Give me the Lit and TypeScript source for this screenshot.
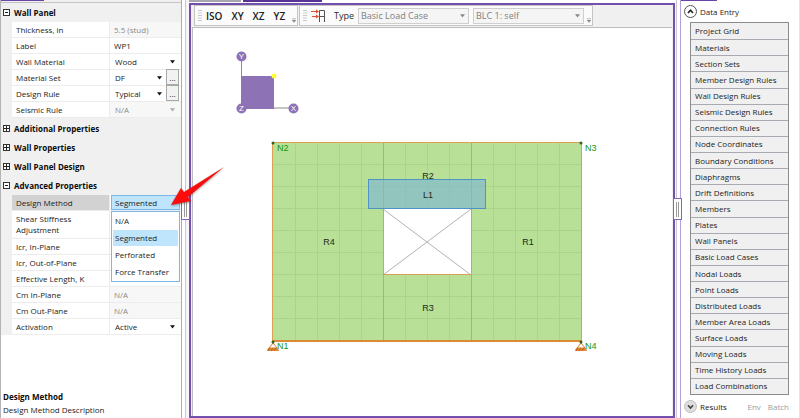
import { LitElement, html, svg, css, nothing } from "lit";
import { customElement, state } from "lit/decorators.js";
import { classMap } from "lit/directives/class-map.js";

type Kind = "text" | "readonly" | "select" | "disabled" | "lookup" | "open";
interface Prop {
  id: string;
  label: string;
  value: string;
  kind: Kind;
  tall?: boolean;
}
interface Group {
  title: string;
  open: boolean;
  props: Prop[];
}

const GROUPS: Group[] = [
  {
    title: "Wall Panel",
    open: true,
    props: [
      { id: "thickness", label: "Thickness, in", value: "5.5 (stud)", kind: "readonly" },
      { id: "label", label: "Label", value: "WP1", kind: "text" },
      { id: "material", label: "Wall Material", value: "Wood", kind: "select" },
      { id: "set", label: "Material Set", value: "DF", kind: "lookup" },
      { id: "rule", label: "Design Rule", value: "Typical", kind: "lookup" },
      { id: "seismic", label: "Seismic Rule", value: "N/A", kind: "disabled" },
    ],
  },
  { title: "Additional Properties", open: false, props: [] },
  { title: "Wall Properties", open: false, props: [] },
  { title: "Wall Panel Design", open: false, props: [] },
  {
    title: "Advanced Properties",
    open: true,
    props: [
      { id: "method", label: "Design Method", value: "Segmented", kind: "open" },
      { id: "shear", label: "Shear Stiffness Adjustment", value: "", kind: "text", tall: true },
      { id: "icr-in", label: "Icr, In-Plane", value: "", kind: "text" },
      { id: "icr-out", label: "Icr, Out-of-Plane", value: "", kind: "text" },
      { id: "length", label: "Effective Length, K", value: "", kind: "text" },
      { id: "cm-in", label: "Cm In-Plane", value: "N/A", kind: "readonly" },
      { id: "cm-out", label: "Cm Out-Plane", value: "N/A", kind: "readonly" },
      { id: "activation", label: "Activation", value: "Active", kind: "select" },
    ],
  },
];

const METHODS = ["N/A", "Segmented", "Perforated", "Force Transfer"];

const ENTRIES = [
  "Project Grid", "Materials", "Section Sets", "Member Design Rules", "Wall Design Rules",
  "Seismic Design Rules", "Connection Rules", "Node Coordinates", "Boundary Conditions",
  "Diaphragms", "Drift Definitions", "Members", "Plates", "Wall Panels", "Basic Load Cases",
  "Nodal Loads", "Point Loads", "Distributed Loads", "Member Area Loads", "Surface Loads",
  "Moving Loads", "Time History Loads", "Load Combinations",
];

const shared = css`
  * { box-sizing: border-box; }
  button, input, select {
    font: inherit;
    color: inherit;
    margin: 0;
    padding: 0;
    border: 0;
    border-radius: 0;
    background: none;
    appearance: none;
    min-width: 0;
  }
  select:disabled, input:disabled { opacity: 1; }
`;

@customElement("property-panel")
class PropertyPanel extends LitElement {
  static styles = [shared, css`
    :host {
      display: flex;
      flex-direction: column;
      background: #fff;
      border-left: 1px solid #b4b4b4;
      color: #222;
      min-height: 0;
    }
    .tabs { height: 3px; flex: none; background: #f0f0f0; border-bottom: 1px solid #c4c4c4; }
    .tab { width: 43px; height: 1px; background: #6b45a5; }
    .group { background: #f0f0f0; padding-bottom: 1px; }
    .group.closed { padding-bottom: 0; }
    .group:last-of-type { padding-bottom: 0; }
    .title {
      display: flex;
      align-items: center;
      gap: 4px;
      width: 100%;
      height: 19px;
      padding-left: 2px;
      font-weight: 700;
      color: #0c0c0c;
      text-align: left;
    }
    .rows { margin-left: 11px; background: #fff; }
    .row {
      display: grid;
      grid-template-columns: 98px 1fr;
      height: 16px;
      border-bottom: 1px solid #ececec;
    }
    .row.tall { height: 28px; }
    .row > label { padding-left: 4px; border-right: 1px solid #ececec; line-height: 15px; white-space: nowrap; }
    .row.tall > label { white-space: normal; line-height: 11px; padding-top: 2px; padding-right: 16px; }
    .row.current > label { background: #d2d2d2; }
    .cell { position: relative; display: flex; align-items: stretch; padding-right: 2px; }
    .cell.dim { background: #f7f7f7; color: #8a8a8a; }
    .cell input { width: 100%; padding-left: 4px; line-height: 15px; }
    .pick { position: relative; display: flex; flex: 1; align-items: center; min-width: 0; }
    .pick select { flex: 1; width: 100%; padding-left: 5px; line-height: 15px; height: 15px; }
    .pick svg { position: absolute; right: 4px; top: 6px; pointer-events: none; }
    .more {
      width: 13px;
      margin-top: -1px;
      border: 1px solid #a8a8a8;
      background: #f2f2f2;
      line-height: 11px;
      text-align: center;
    }
    .open { padding: 0 1px; }
    .open select { padding-left: 3px; border: 1px solid #7db7e6; background: #bfe5fd; line-height: 13px; }
    .menu {
      position: absolute;
      z-index: 2;
      top: 16px;
      left: 1px;
      right: 1px;
      margin: 0;
      padding: 1px;
      list-style: none;
      background: #fff;
      border: 1px solid #7db7e6;
    }
    .menu li { height: 16px; line-height: 16px; padding-left: 2px; white-space: nowrap; }
    .menu li + li { margin-top: 1px; }
    .menu .chosen { background: #bfe5fd; }
    .about { margin-top: auto; padding: 0 2px 2px; line-height: 13px; }
    .about h2 { margin: 0; font-size: inherit; color: #0c0c0c; }
    .about p { margin: 0; }
  `];

  @state() private method = "Segmented";

  private cell(p: Prop) {
    if (p.kind === "text" || p.kind === "readonly") {
      return html`<div class=${classMap({ cell: true, dim: p.kind === "readonly" })}>
        <input id=${p.id} .value=${p.value} ?readonly=${p.kind === "readonly"} />
      </div>`;
    }
    const isOpen = p.kind === "open";
    const off = p.kind === "disabled";
    return html`<div class=${classMap({ cell: true, dim: off, open: isOpen })}>
      <div class="pick">
        <select id=${p.id} ?disabled=${off}>
          ${isOpen
            ? METHODS.map((m) => html`<option ?selected=${m === this.method}>${m}</option>`)
            : html`<option>${p.value}</option>`}
        </select>
        ${isOpen
          ? nothing
          : html`<svg width="5" height="4" viewBox="0 0 5 4"><path d="M0 0.3h5L2.5 3.6z" fill=${off ? "#aaa" : "#111"} /></svg>`}
      </div>
      ${p.kind === "lookup" ? html`<button class="more" aria-label="Browse ${p.label}">...</button>` : nothing}
      ${isOpen
        ? html`<ul class="menu" role="listbox" aria-label=${p.label}>
            ${METHODS.map((m) => html`<li role="option" class=${classMap({ chosen: m === this.method })}
              @click=${() => (this.method = m)}>${m}</li>`)}
          </ul>`
        : nothing}
    </div>`;
  }

  render() {
    return html`
      <div class="tabs"><div class="tab"></div></div>
      ${GROUPS.map((g) => html`<section class=${classMap({ group: true, closed: !g.open })}>
        <button class="title" aria-expanded=${g.open ? "true" : "false"}>
          <svg width="7" height="7" viewBox="0 0 7 7">
            <rect x="0.5" y="0.5" width="6" height="6" fill="#fff" stroke="#333" />
            <path d=${g.open ? "M2 3.5h3" : "M1 3.5h5M3.5 1v5"} stroke="#222" />
          </svg>
          ${g.title}
        </button>
        ${g.open
          ? html`<div class="rows">${g.props.map((p) => html`
              <div class=${classMap({ row: true, tall: !!p.tall, current: p.kind === "open" })}>
                <label for=${p.id}>${p.label}</label>
                ${this.cell(p)}
              </div>`)}</div>`
          : nothing}
      </section>`)}
      <div class="about">
        <h2>Design Method</h2>
        <p>Design Method Description</p>
      </div>
    `;
  }
}

@customElement("model-view")
class ModelView extends LitElement {
  static styles = [shared, css`
    :host { display: flex; flex-direction: column; min-width: 0; min-height: 0; color: #2c2c2c; }
    .tabs { display: flex; gap: 2px; height: 3px; flex: none; }
    .tab { width: 52px; height: 2px; background: #aaa6b0; }
    .tab.active { width: 79px; background: #5b3397; }
    .window {
      flex: 1;
      display: flex;
      flex-direction: column;
      min-height: 0;
      border: 2px solid #7450ae;
      padding: 0 1px;
      background: #f0f0f0;
    }
    .bar { display: flex; height: 22px; flex: none; font-size: 9px; padding-left: 2px; gap: 1px; }
    .group {
      position: relative;
      display: flex;
      align-items: center;
      background: #fbfbfb;
      border: 1px solid #c4c4c4;
      padding-left: 3px;
      height: 21px;
    }
    .views { width: 104px; }
    .buttons { display: flex; gap: 9px; margin-left: 4px; font-size: 10px; }
    .buttons button { font-weight: 600; color: #222; }
    .load { width: 294px; }
    .grip { flex: none; }
    .load .icon { flex: none; margin-left: 4px; }
    .load > label { margin-left: 8px; width: 24px; }
    .pick { position: relative; display: flex; }
    .pick select {
      width: 111px;
      height: 16px;
      padding-left: 2px;
      color: #808080;
      background: #f5f5f5;
      border: 1px solid #cfcfcf;
    }
    .pick svg { position: absolute; right: 4px; top: 6px; }
    .pick + .pick { margin-left: 4px; }
    .overflow { position: absolute; right: 1px; bottom: 2px; }
    .canvas { flex: 1; min-height: 0; background: #fff; border: 1px solid #bdbdbd; border-width: 1px 0 0 1px; }
    .canvas svg { display: block; width: 100%; height: 100%; }
    .tag { font: 9px "Liberation Sans", Arial, sans-serif; fill: #1f2a1a; text-anchor: middle; }
    .node { font: 9px "Liberation Sans", Arial, sans-serif; fill: #149614; }
    .axis { font: 8px "Liberation Sans", Arial, sans-serif; fill: #fff; text-anchor: middle; }
  `];

  private grip = html`<svg class="grip" width="4" height="14" viewBox="0 0 4 14">
    <path d="M1 1v12M3 1v12" stroke="#999" stroke-dasharray="1 1.5" /></svg>`;

  private overflow = html`<svg class="overflow" width="4" height="5" viewBox="0 0 4 5">
    <path d="M0 0.5h4M0 2h4L2 4.5z" fill="#888" stroke="#888" stroke-width="0.4" /></svg>`;

  private arrow = html`<svg width="5" height="4" viewBox="0 0 5 4"><path d="M0 0.3h5L2.5 3.6z" fill="#888" /></svg>`;

  private support(x: number) {
    return svg`<path d="M${x} 315l-4 5h8z" fill="#fff" stroke="#d97b29" />
      <path d="M${x - 5} 320h10l1 3h-12z" fill="#e08a3c" />
      <path d="M${x - 3} 320l-2 3M${x} 320l-2 3M${x + 3} 320l-2 3" stroke="#bd5c12" />`;
  }

  private axis(x: number, y: number, name: string) {
    return svg`<circle cx=${x + 0.5} cy=${y + 0.5} r="5" fill="#8d72b5" />
      <text class="axis" x=${x + 0.5} y=${y + 3}>${name}</text>`;
  }

  render() {
    const cols = Array.from({ length: 13 }, (_, i) => 102 + i * 22).filter((x) => x !== 190 && x !== 278);
    const rows = Array.from({ length: 8 }, (_, i) => 137 + i * 22);
    return html`
      <div class="tabs"><div class="tab"></div><div class="tab active"></div></div>
      <div class="window">
        <div class="bar">
          <div class="group views">
            ${this.grip}
            <div class="buttons">
              <button>ISO</button><button>XY</button><button>XZ</button><button>YZ</button>
            </div>
            ${this.overflow}
          </div>
          <div class="group load">
            ${this.grip}
            <svg class="icon" width="15" height="14" viewBox="0 0 15 14">
              <path d="M8.5 13V1.5h5V13M8.5 7.5h5" fill="none" stroke="#555" />
              <path d="M0 2.5h6M1 7.5h5" stroke="#e0502f" />
              <path d="M5 0.5l3 2-3 2zM5 5.5l3 2-3 2z" fill="#e0502f" />
            </svg>
            <label for="load-type">Type</label>
            <div class="pick"><select id="load-type" disabled><option>Basic Load Case</option></select>${this.arrow}</div>
            <div class="pick"><select aria-label="Load case" disabled><option>BLC 1: self</option></select>${this.arrow}</div>
            ${this.overflow}
          </div>
        </div>
        <div class="canvas">
          <svg role="img" aria-label="Wall panel WP1">
            <path d="M48.5 28v52h52" fill="none" stroke="#8b8b8b" />
            <rect x="48" y="48" width="33" height="33" fill="#8d72b5" />
            <circle cx="81" cy="48" r="2.5" fill="#ffff3c" />
            ${this.axis(48, 28, "Y")}${this.axis(48, 80, "Z")}${this.axis(100, 80, "X")}

            <rect x="80" y="115" width="308" height="198" fill="#b8e096" />
            ${cols.map((x) => svg`<path d="M${x + 0.5} 115v198" stroke="#aad48b" />`)}
            ${rows.map((y) => svg`<path d="M80 ${y - 0.5}h308" stroke="#aad48b" />`)}
            <rect x="190" y="181" width="88" height="66" fill="#fff" />
            <path d="M190 181l88 66M278 181l-88 66" stroke="#b2b2b2" />
            <path d="M190.5 115v198M278.5 115v198M190 246.5h88" stroke="#dba052" fill="none" />
            <rect x="79.5" y="114.5" width="309" height="199" fill="none" stroke="#dba052" />
            <path d="M79 313h310" stroke="#dc8b35" stroke-width="2" />
            <rect x="175.5" y="151.5" width="117" height="29" fill="#7fb8d0" fill-opacity="0.68" stroke="#4f92c4" />
            <circle cx="80" cy="115" r="1.5" fill="#2f6424" />
            <circle cx="388" cy="115" r="1.5" fill="#2f6424" />
            ${this.support(80)}${this.support(388)}
            <circle cx="80" cy="314" r="1.5" fill="#2f6424" />
            <circle cx="388" cy="314" r="1.5" fill="#2f6424" />
            <text class="tag" x="235" y="151">R2</text>
            <text class="tag" x="235" y="170">L1</text>
            <text class="tag" x="136" y="217">R4</text>
            <text class="tag" x="335" y="217">R1</text>
            <text class="tag" x="235" y="283">R3</text>
            <text class="node" x="84" y="123">N2</text>
            <text class="node" x="392" y="123">N3</text>
            <text class="node" x="84" y="321">N1</text>
            <text class="node" x="392" y="321">N4</text>
          </svg>
        </div>
      </div>
    `;
  }
}

@customElement("data-panel")
class DataPanel extends LitElement {
  static styles = [shared, css`
    :host {
      display: flex;
      flex-direction: column;
      background: #fff;
      border-right: 1px solid #e4e4e4;
      color: #222;
      min-height: 0;
    }
    .tab { width: 36px; height: 1px; flex: none; background: #6b45a5; }
    .head { display: flex; align-items: center; height: 21px; flex: none; padding-left: 3px; }
    .head button { display: flex; align-items: center; gap: 3px; }
    .head.results { height: 23px; }
    .links { display: flex; gap: 7px; margin-left: auto; padding-right: 10px; }
    a { color: #9c9c9c; text-decoration: none; }
    ul {
      flex: 1;
      display: grid;
      grid-auto-rows: 1fr;
      margin: 0 10px 0 9px;
      padding: 0;
      list-style: none;
      border: 1px solid #8c8c8c;
      background: #f0f0f0;
    }
    li { display: flex; min-height: 0; }
    li + li { border-top: 1px solid #a9a9b1; }
    li button { flex: 1; padding-left: 4px; text-align: left; line-height: 14px; white-space: nowrap; }
  `];

  render() {
    return html`
      <div class="tab"></div>
      <div class="head">
        <button aria-expanded="true">
          <svg width="13" height="13" viewBox="0 0 13 13">
            <circle cx="6.5" cy="6.5" r="6" fill="#fff" stroke="#555" />
            <path d="M4 8l2.5-2.8L9 8" fill="none" stroke="#222" stroke-width="1.6" />
          </svg>Data Entry
        </button>
      </div>
      <ul>${ENTRIES.map((e) => html`<li><button>${e}</button></li>`)}</ul>
      <div class="head results">
        <button aria-expanded="false">
          <svg width="13" height="13" viewBox="0 0 13 13">
            <circle cx="6.5" cy="6.5" r="6" fill="#dedede" stroke="#bdbdbd" />
            <path d="M4 5.2L6.5 8 9 5.2" fill="none" stroke="#444" stroke-width="1.6" />
          </svg>Results
        </button>
        <div class="links"><a href="#env">Env</a><a href="#batch">Batch</a></div>
      </div>
    `;
  }
}

@customElement("app-root")
class AppRoot extends LitElement {
  static styles = [shared, css`
    :host {
      display: grid;
      grid-template-columns: 181px 8px minmax(0, 1fr) 6px 119px;
      position: relative;
      height: 100vh;
      font: 8px/14px "Open Sans", "Noto Sans", sans-serif;
      background: #fff;
      overflow: hidden;
    }
    .splitter {
      position: relative;
      display: flex;
      align-items: center;
      justify-content: center;
      border-left: 1px solid #b3a0d6;
      background: linear-gradient(90deg, #fff 3px, #c9c9d2 3px, #c9c9d2 4px, #f6f6f8 4px);
    }
    .splitter.right {
      border-left: 0;
      border-right: 1px solid #b3a0d6;
      background: linear-gradient(90deg, #f6f6f8 1px, #c9c9d2 1px, #c9c9d2 2px, #fff 2px);
    }
    .handle {
      z-index: 1;
      flex: none;
      display: flex;
      align-items: center;
      justify-content: center;
      gap: 1px;
      width: 9px;
      height: 22px;
      background: #fff;
      border: 1px solid #8464b8;
    }
    .handle i { width: 1px; height: 15px; background: #999; }
    .pointer {
      position: absolute;
      left: 168px;
      top: 163px;
      z-index: 3;
      pointer-events: none;
      filter: drop-shadow(0 1px 1px rgba(0, 0, 0, 0.4));
    }
  `];

  render() {
    const handle = html`<div class="handle"><i></i><i></i></div>`;
    return html`
      <property-panel></property-panel>
      <div class="splitter">${handle}</div>
      <model-view></model-view>
      <div class="splitter right">${handle}</div>
      <data-panel></data-panel>
      <svg class="pointer" width="60" height="46" viewBox="0 0 60 46">
        <path d="M3 42L13 25l3 4L56 4 20 34l3 4z" fill="#fb0d0d" />
      </svg>
    `;
  }
}
